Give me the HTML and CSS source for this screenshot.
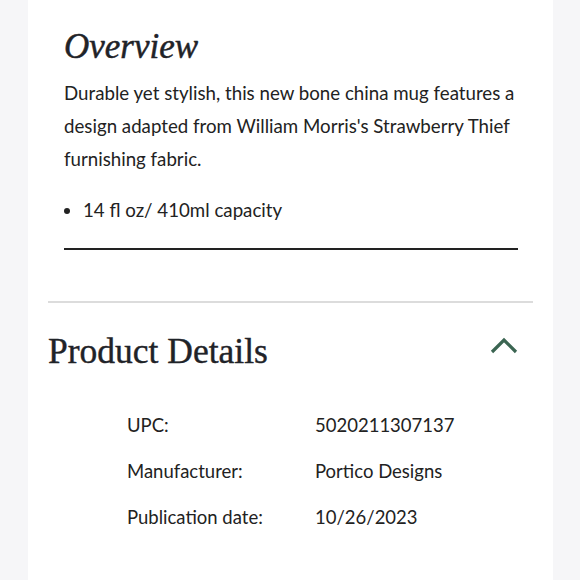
FILE: index.html
```html
<!DOCTYPE html>
<html>
<head>
<meta charset="utf-8">
<link rel="stylesheet" href="styles.css">
</head>
<body>
<main class="panel">
  <section class="overview">
    <h2 class="overview-title">Overview</h2>
    <p class="overview-text">Durable yet stylish, this new bone china mug features a design adapted from William Morris's Strawberry Thief furnishing fabric.</p>
    <ul class="overview-list">
      <li>14 fl oz/ 410ml capacity</li>
    </ul>
    <div class="overview-rule"></div>
  </section>
  <div class="divider"></div>
  <section class="details">
    <div class="details-head">
      <h2 class="details-title">Product Details</h2>
      <svg class="chevron" width="28" height="18" viewBox="0 0 28 18"><path d="M2 15 L14 3 L26 15" fill="none" stroke="#3b6552" stroke-width="3.2"/></svg>
    </div>
    <table class="details-table">
      <tr><td class="label">UPC:</td><td>5020211307137</td></tr>
      <tr><td class="label">Manufacturer:</td><td>Portico Designs</td></tr>
      <tr><td class="label">Publication date:</td><td>10/26/2023</td></tr>
    </table>
  </section>
</main>
</body>
</html>
```

FILE: styles.css
```css
html, body {
  margin: 0;
  padding: 0;
  background: #f6f6f8;
}
.panel {
  margin: 0 27px 0 28px;
  background: #fff;
  min-height: 580px;
  font-family: Lato, "Liberation Sans", sans-serif;
  color: #222;
}
.overview {
  padding: 27px 35px 0 36px;
}
.overview-title {
  margin: 0;
  font-family: "Liberation Serif", serif;
  font-style: italic;
  font-weight: normal;
  font-size: 35px;
  line-height: 40px;
  color: #1f2328;
  -webkit-text-stroke: 0.5px #1f2328;
}
.overview-text {
  margin: 10px 0 0;
  font-size: 18.7px;
  line-height: 33px;
}
.overview-list {
  margin: 18px 0 0;
  padding-left: 19px;
  font-size: 18.7px;
  line-height: 33px;
}
.overview-rule {
  margin-top: 21px;
  border-top: 2px solid #222;
}
.divider {
  margin: 51px 20px 0;
  border-top: 2px solid #dcdcdc;
}
.details {
  padding: 28px 20px 0 20px;
}
.details-head {
  display: flex;
  justify-content: space-between;
  align-items: flex-start;
}
.details-title {
  margin: 0;
  font-family: "Liberation Serif", serif;
  font-weight: normal;
  font-size: 35.5px;
  line-height: 40px;
  color: #1f2328;
  -webkit-text-stroke: 0.4px #1f2328;
}
.chevron {
  margin: 6px 15px 0 0;
}
.details-table {
  margin: 31px 0 0 79px;
  border-collapse: collapse;
  font-size: 18.5px;
}
.details-table td {
  padding: 0;
  height: 46px;
  vertical-align: middle;
}
.details-table .label {
  width: 188px;
}
```
